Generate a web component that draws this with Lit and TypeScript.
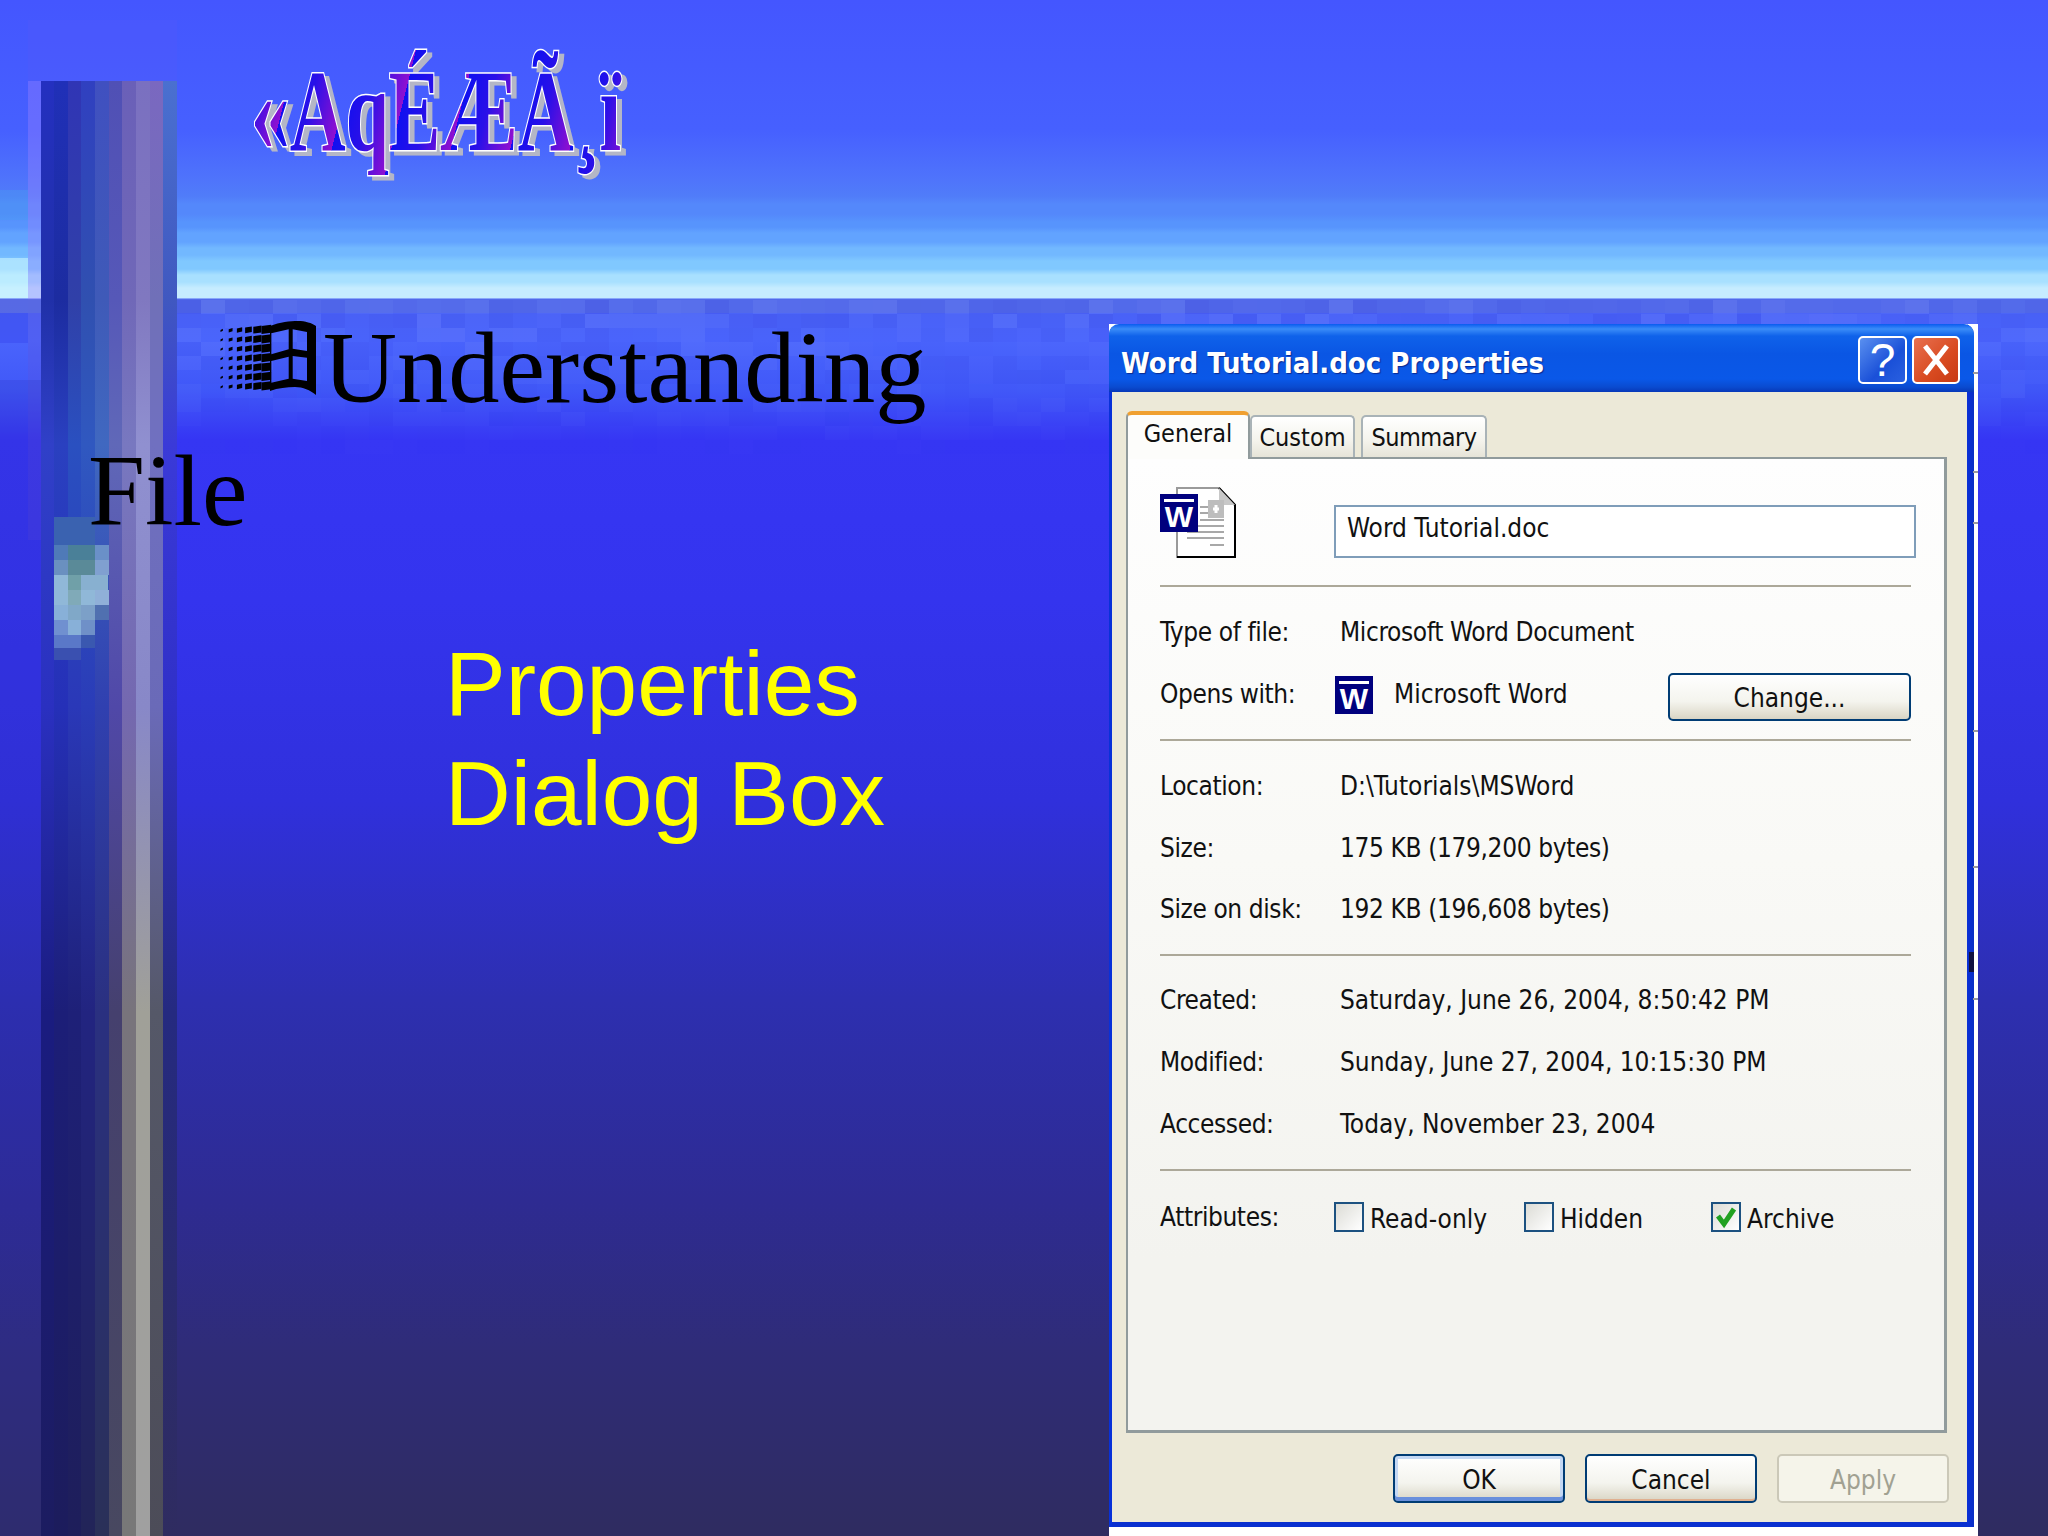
import { LitElement, html, css, svg } from "lit";
import { customElement } from "lit/decorators.js";

const COLS: [number, string[]][] = [
  [41, ["#2430c0", "#2030a8", "#3040c8", "#2a30c0", "#1a1c80", "#1c1c60"]],
  [54, ["#2030b8", "#1c2ca0", "#2a40c0", "#2530b8", "#1c1e78", "#1c1c5c"]],
  [68, ["#3035b5", "#3040a8", "#2a50c0", "#2a38b8", "#1e2078", "#1e1e5a"]],
  [81, ["#3040c0", "#3050b0", "#3058c0", "#2a3cb8", "#222480", "#222458"]],
  [95, ["#4050c0", "#3f5ab8", "#4068c0", "#3040b0", "#2a3080", "#2a3058"]],
  [109, ["#5050b5", "#5658b8", "#6068b8", "#5048a8", "#45406e", "#484860"]],
  [122, ["#6a60b8", "#7068b8", "#7878c0", "#7468b0", "#78747c", "#787878"]],
  [136, ["#7a70c0", "#8078c0", "#9090d0", "#8888c8", "#a0a098", "#a0a0a0"]],
  [150, ["#7a68c0", "#7070b8", "#7070c0", "#6a6ab8", "#555868", "#4c4c58"]],
  [163, ["#4a70d0", "#4058c0", "#3a3ad8", "#3030c8", "#252a80", "#2f2c60"]],
];
const STOPS = [0, 0.15, 0.25, 0.43, 0.64, 1];

function noise() {
  const out = [];
  let seed = 7;
  const rnd = () => {
    seed = (seed * 16807) % 2147483647;
    return seed / 2147483647;
  };
  for (let r = 0; r < 11; r++) {
    for (let c = 0; c < 78; c++) {
      const fade = 1 - r / 11;
      const v = rnd() - 0.5;
      out.push(
        svg`<rect x=${177 + c * 24} y=${300 + r * 14} width="24" height="14"
          fill=${v > 0 ? "#9ab0ff" : "#2a30d0"} fill-opacity=${(Math.abs(v) * 0.3 * fade).toFixed(3)}></rect>`
      );
    }
  }
  return out;
}

// x, y, width in columns, height, colour
const BLOTCH: [number, number, number, number, string][] = [
  [54, 517, 3, 28, "#3a62b0"],
  [54, 545, 1, 15, "#4f7ab8"], [68, 545, 2, 15, "#4a8098"], [95, 545, 1, 15, "#6a90c8"],
  [54, 560, 1, 15, "#6a90c0"], [68, 560, 2, 15, "#5a8a98"], [95, 560, 1, 15, "#80a0d0"],
  [54, 575, 1, 15, "#90b8d8"], [68, 575, 1, 15, "#70a0a8"], [81, 575, 2, 15, "#88b0d0"],
  [54, 590, 1, 15, "#90b8d8"], [68, 590, 1, 15, "#80aab8"], [81, 590, 1, 15, "#90b8d8"], [95, 590, 1, 15, "#90b0d8"],
  [54, 605, 1, 15, "#88b0d8"], [68, 605, 1, 15, "#80a8c8"], [81, 605, 1, 15, "#7ca0c8"], [95, 605, 1, 15, "#5070b0"],
  [54, 620, 1, 15, "#7090d0"], [68, 620, 1, 15, "#88b0d8"], [81, 620, 1, 15, "#6f90c8"],
  [54, 635, 2, 13, "#5a78c8"], [81, 635, 1, 13, "#3a58b0"],
  [54, 648, 2, 12, "#3a50b0"],
];

function backdrop() {
  return html`<svg class="backdrop" viewBox="0 0 2048 1536" width="2048" height="1536" aria-hidden="true">
    <defs>
      ${COLS.map(
        ([x, cs]) => svg`<linearGradient id=${"c" + x} x1="0" y1="0" x2="0" y2="1">
          ${cs.map((col, i) => svg`<stop offset=${STOPS[i]} stop-color=${col}></stop>`)}
        </linearGradient>`
      )}
    </defs>
    <rect x="177" y="299" width="1871" height="14" fill="#566ce6" fill-opacity=".7"></rect>
    ${noise()}
    <rect x="28" y="20" width="149" height="61" fill="#7a5cf0" fill-opacity=".1"></rect>
    <rect x="28" y="81" width="13" height="219" fill="#9a80ff" fill-opacity=".38"></rect>
    <rect x="28" y="300" width="13" height="240" fill="#6a50d0" fill-opacity=".2"></rect>
    <rect x="0" y="299" width="41" height="14" fill="#5a6ce0" fill-opacity=".8"></rect>
    <rect x="0" y="313" width="28" height="30" fill="#3038e8" fill-opacity=".3"></rect>
    <rect x="0" y="190" width="28" height="30" fill="#48a0f0" fill-opacity=".35"></rect>
    <rect x="0" y="258" width="28" height="40" fill="#c8f4ff" fill-opacity=".6"></rect>
    <rect x="0" y="380" width="41" height="1156" fill="#2c2cb0" fill-opacity=".18"></rect>
    ${COLS.map(
      ([x]) => svg`<rect x=${x} y="81" width="14" height="1455" fill=${"url(#c" + x + ")"}></rect>`
    )}
    ${BLOTCH.map(
      ([x, y, n, h, col]) => svg`<rect x=${x} y=${y} width=${n === 1 ? 14 : n === 2 ? 27 : 41} height=${h} fill=${col}></rect>`
    )}
  </svg>`;
}

function windowsBullet() {
  const marks = [];
  for (let c = 0; c < 6; c++) {
    for (let r = 0; r < 7; r++) {
      const s = 2 + c * 1.2;
      const x = 0.5 + c * 8.2;
      const y = 9 + r * 9.4 - c * 0.8;
      const w = s * 1.2;
      marks.push(svg`<path d="M${x} ${y + 1}l${w} -1.2v${s}l${-w} 1.2z"></path>`);
    }
  }
  return html`<svg class="bullet" viewBox="0 0 103 76" width="103" height="76" aria-hidden="true">
    <g fill="#000">${marks}</g>
    <path fill="#000" fill-rule="evenodd" d="M50 6C60 2 70 1 78 1C85 1 92 3 96 6V75C90 70 83 67 75 67C67 67 58 68 50 71ZM51.300 13.300L68.700 9.300V29.300L51.300 34.300ZM72.700 9.300L87 12V31L72.700 28.700ZM51.300 41L68.700 36.700V58.700L51.300 62.700ZM72.700 36L87 37.700V61L72.700 58.700Z"></path>
  </svg>`;
}

function wordBadge() {
  return svg`<rect x="0" y="0" width="38" height="38" fill="#00007e"></rect>
    <rect x="4" y="5" width="30" height="3" fill="#fff"></rect>
    <text x="19" y="33" text-anchor="middle" font-family="Liberation Sans" font-weight="700" font-size="30" fill="#fff">W</text>`;
}

@customElement("file-icon")
class FileIcon extends LitElement {
  static styles = css`
    :host { display: block; width: 76px; height: 71px; }
    svg { display: block; }
  `;
  render() {
    return html`<svg viewBox="0 0 76 71" width="76" height="71" aria-hidden="true">
      <path d="M17 1H59L75 18V70H17Z" fill="#fff" stroke="#9a9a9a" stroke-width="2"></path>
      <path d="M59 1L75 18V70H17" fill="none" stroke="#000" stroke-width="2"></path>
      <path d="M59 1V18H75Z" fill="#c8c8c8"></path>
      <rect x="48" y="13" width="16" height="18" fill="#bdbdbd"></rect>
      <path d="M53 22h6M56 18v8" stroke="#fff" stroke-width="3"></path>
      <path d="M40 20h8M40 26h8M40 33h24M27 39h37M27 45h37M27 51h37M50 58h14" stroke="#a8a8a8" stroke-width="2"></path>
      <g transform="translate(0 7)">${wordBadge()}</g>
    </svg>`;
  }
}

@customElement("app-root")
class AppRoot extends LitElement {
  static styles = css`
    :host {
      display: block;
      position: relative;
      width: 2048px;
      height: 1536px;
      overflow: hidden;
      background: linear-gradient(180deg,
        #4456ff 0, #4660ff 130px, #4f74fb 180px,
        #507cf9 196px, #5488fb 204px, #5488fb 214px, #5794fd 222px, #5794fd 227px,
        #62a3ff 233px, #62a3ff 242px, #72b8ff 248px, #72b8ff 255px, #80c8ff 261px, #80c8ff 269px,
        #a8e0ff 275px, #a8e0ff 282px, #c6ecff 288px, #c6ecff 298px,
        #4a62f4 299px, #4a64fc 340px, #4058f8 390px, #3636f4 440px, #3434ee 600px, #3030dc 800px,
        #2d2fb0 1000px, #2e2b92 1200px, #2f2c78 1350px, #2f2c60 1536px);
      font-family: "DejaVu Sans Condensed", "Liberation Sans", sans-serif;
    }
    .backdrop { position: absolute; left: 0; top: 0; display: block; }
    .slide { position: relative; display: grid; grid-template-columns: 1109px 869px; height: 1536px; }

    .left { padding-top: 40px; }
    .wordart { display: block; margin-left: 240px; overflow: visible; }
    .wa {
      font-family: "Liberation Serif", serif;
      font-size: 116px;
      font-weight: 700;
      stroke: #fff;
      stroke-width: 3px;
      paint-order: stroke;
      filter: drop-shadow(5px 4px 0 #b4b6c6);
    }

    h1 {
      margin: 106px 0 0;
      padding-left: 88px;
      font: 400 102.500px/123px "Liberation Serif", serif;
      color: #000;
      text-indent: 132px;
      white-space: nowrap;
    }
    .bullet { display: inline-block; vertical-align: 6px; text-indent: 0; }
    .callout {
      margin: 77px 0 0 445px;
      font: 400 91px/110px "Liberation Sans", sans-serif;
      color: #ffff00;
    }

    .right { padding-top: 324px; }
    .shot {
      position: relative;
      height: 1212px;
      background: #fff;
      padding-right: 4px;
    }
    .tick { position: absolute; right: 0; width: 5px; height: 2px; background: #9a9aa0; }
    .tick.d { width: 5px; height: 20px; background: #101040; right: 4px; }

    .dialog {
      height: 1203px;
      border-radius: 10px 10px 0 0;
      background: linear-gradient(90deg, #0831d9 0 3px, transparent 3px), linear-gradient(270deg, #0a2ec4 0, #0a30d8 7px, transparent 7px), linear-gradient(0deg, #0a30d0 0 5px, #ece9d8 5px);
      display: flex;
      flex-direction: column;
    }
    .titlebar {
      height: 68px;
      flex: none;
      border-radius: 10px 10px 0 0;
      background: linear-gradient(180deg, #0a5cf0 0, #3a8cf8 5px, #0f62ea 12px, #0a56e4 30px, #0a58e8 55px, #0a4bd0 63px, #0838b8 68px);
      display: flex;
      align-items: flex-start;
      padding: 12px 14px 0 12px;
      box-sizing: border-box;
    }
    .title {
      flex: 1;
      font-weight: 700;
      font-size: 29px;
      line-height: 37px;
      margin-top: 9px;
      color: #fff;
      text-shadow: 1px 1px 1px #0a2a90;
      white-space: nowrap;
    }
    .cap {
      width: 49px;
      height: 48px;
      box-sizing: border-box;
      border: 2px solid #fff;
      border-radius: 5px;
      color: #fff;
      display: flex;
      align-items: center;
      justify-content: center;
      font: 400 46px/44px "Liberation Sans", sans-serif;
      margin-left: 5px;
    }
    .help { background: linear-gradient(135deg, #5a90f0, #1a50d8 60%, #2a60e0); }
    .close { background: linear-gradient(135deg, #e87050, #d84a20 60%, #c83a14); width: 48px; }
    .close svg { display: block; }

    .body { flex: 1; display: flex; flex-direction: column; padding: 0 8px 5px 3px; }
    .tabs { display: flex; align-items: flex-end; height: 65px; flex: none; padding-left: 14px; }
    .tab {
      box-sizing: border-box;
      height: 42px;
      border: 2px solid #a9b3b7;
      border-bottom: none;
      border-radius: 5px 5px 0 0;
      background: linear-gradient(180deg, #fff, #f4f3ec 60%, #e6e4d8);
      font-size: 25px;
      line-height: 42px;
      color: #111;
      text-align: center;
    }
    .t-custom { width: 105px; margin-right: 6px; }
    .t-summary { width: 126px; letter-spacing: -0.5px; }
    .t-general {
      width: 124px;
      height: 48px;
      border-color: #919b9c;
      border-top: 4px solid #f0a030;
      border-radius: 6px 6px 0 0;
      background: #fdfdfb;
      line-height: 37px;
      margin-bottom: -2px;
      position: relative;
      z-index: 1;
    }
    .panel {
      box-sizing: border-box;
      margin-left: 14px;
      width: 821px;
      height: 976px;
      flex: none;
      border: 2px solid #919b9c;
      border-bottom-width: 3px;
      border-right-width: 3px;
      background: linear-gradient(180deg, #fefefe 0, #f9f9f6 400px, #f3f3ef 800px);
      padding: 28px 0 0 32px;
      font-size: 26px;
      color: #111;
    }
    .head { display: grid; grid-template-columns: 174px 582px; height: 71px; }
    .name {
      box-sizing: border-box;
      height: 53px;
      margin-top: 18px;
      border: 2px solid #7f9db9;
      background: #fff;
      padding-left: 11px;
      line-height: 43px;
      white-space: nowrap;
    }
    .sep { width: 751px; height: 2px; background: #aca899; }
    .sep.s1 { margin-top: 27px; }
    .gap { margin-top: 14px; }
    .gap-c { margin-top: 13.500px; }
    .gap-l { margin-top: 14px; }
    .gap-a { margin-top: 15px; }
    .row {
      display: grid;
      grid-template-columns: 180px 1fr;
      height: 62px;
      width: 751px;
      line-height: 62px;
      white-space: nowrap;
    }
    .row > span:first-child { letter-spacing: -0.4px; }
    .row.short { height: 61.500px; }
    .narrow { letter-spacing: -0.37px; }
    .opens { grid-template-columns: 174px 60px 1fr 243px; }
    .mini { display: block; margin-top: 13px; }
    .btn {
      box-sizing: border-box;
      border: 2px solid #003c74;
      border-radius: 5px;
      background: linear-gradient(180deg, #fff, #f4f4ee 60%, #e0ddcf 90%, #d8d4c4);
      color: #111;
      font-size: 26px;
      text-align: center;
      width: 172px;
      height: 49px;
      line-height: 48px;
    }
    .opens .btn { width: 243px; margin-top: 10px; height: 48px; line-height: 46px; }
    .attrs { grid-template-columns: 174px 190px 187px 1fr; }
    .check { display: flex; align-items: center; gap: 6px; height: 62px; }
    .check span { position: relative; top: 2px; }
    .box {
      box-sizing: border-box;
      width: 30px;
      height: 30px;
      border: 2px solid #1c5180;
      background: linear-gradient(135deg, #dcdcd6, #fff);
      flex: none;
      display: block;
    }
    .box svg { display: block; }

    .foot {
      flex: 1;
      display: flex;
      justify-content: flex-end;
      gap: 20px;
      padding: 21px 17px 0 0;
      box-sizing: border-box;
    }
    .btn.ok { border-color: #003c74; box-shadow: inset 0 3px 0 #c4d8f4, inset 0 -4px 0 #6a90dc, inset 3px 0 0 #c4d8f4, inset -3px 0 0 #c4d8f4; }
    .btn.cancel { box-shadow: inset 0 -2px 0 #e0b090; }
    .btn.apply { border-color: #cbc8b8; background: #f5f4ea; color: #a1a192; }
  `;

  render() {
    return html`${backdrop()}
      <div class="slide">
        <div class="left">
          <svg class="wordart" viewBox="0 0 420 160" width="420" height="160">
            <defs>
              <linearGradient id="wa" gradientUnits="userSpaceOnUse" x1="0" y1="0" x2="56" y2="14" spreadMethod="repeat">
                <stop offset="0" stop-color="#1010f0"></stop>
                <stop offset=".45" stop-color="#2a10e8"></stop>
                <stop offset="1" stop-color="#9010d0"></stop>
              </linearGradient>
            </defs>
            <text class="wa" x="11" y="110" textLength="370" lengthAdjust="spacingAndGlyphs" fill="url(#wa)">«AqÉÆÃ¸ï</text>
          </svg>
          <h1>${windowsBullet()}Understanding<br />File</h1>
          <div class="callout">Properties<br />Dialog Box</div>
        </div>
        <div class="right">
          <div class="shot">
            <i class="tick" style="top:48px"></i>
            <i class="tick" style="top:147px"></i>
            <i class="tick" style="top:198px"></i>
            <i class="tick" style="top:406px"></i>
            <i class="tick" style="top:542px"></i>
            <i class="tick d" style="top:628px"></i>
            <i class="tick" style="top:674px"></i>
            <div class="dialog">
              <div class="titlebar">
                <div class="title">Word Tutorial.doc Properties</div>
                <div class="cap help">?</div>
                <div class="cap close">
                  <svg viewBox="0 0 44 44" width="44" height="44"><path d="M11 8L33 36M33 8L11 36" stroke="#fff" stroke-width="5"></path></svg>
                </div>
              </div>
              <div class="body">
                <div class="tabs">
                  <div class="tab t-general">General</div>
                  <div class="tab t-custom">Custom</div>
                  <div class="tab t-summary">Summary</div>
                </div>
                <div class="panel">
                  <div class="head">
                    <file-icon></file-icon>
                    <div class="name">Word Tutorial.doc</div>
                  </div>
                  <div class="sep s1"></div>
                  <div class="row gap"><span>Type of file:</span><span class="narrow">Microsoft Word Document</span></div>
                  <div class="row opens">
                    <span>Opens with:</span>
                    <svg class="mini" viewBox="0 0 38 38" width="40" height="38">${wordBadge()}</svg>
                    <span>Microsoft Word</span>
                    <div class="btn">Change...</div>
                  </div>
                  <div class="sep gap"></div>
                  <div class="row gap short"><span>Location:</span><span>D:\\Tutorials\\MSWord</span></div>
                  <div class="row short"><span>Size:</span><span class="narrow">175 KB (179,200 bytes)</span></div>
                  <div class="row short"><span>Size on disk:</span><span class="narrow">192 KB (196,608 bytes)</span></div>
                  <div class="sep gap"></div>
                  <div class="row gap-c"><span>Created:</span><span>Saturday, June 26, 2004, 8:50:42 PM</span></div>
                  <div class="row"><span>Modified:</span><span>Sunday, June 27, 2004, 10:15:30 PM</span></div>
                  <div class="row"><span>Accessed:</span><span>Today, November 23, 2004</span></div>
                  <div class="sep gap-l"></div>
                  <div class="row attrs gap-a">
                    <span>Attributes:</span>
                    <div class="check"><i class="box"></i><span>Read-only</span></div>
                    <div class="check"><i class="box"></i><span>Hidden</span></div>
                    <div class="check">
                      <i class="box"><svg viewBox="0 0 26 26" width="26" height="26"><path d="M5 12L11 20L21 5" fill="none" stroke="#21a121" stroke-width="5"></path></svg></i>
                      <span>Archive</span>
                    </div>
                  </div>
                </div>
                <div class="foot">
                  <div class="btn ok">OK</div>
                  <div class="btn cancel">Cancel</div>
                  <div class="btn apply">Apply</div>
                </div>
              </div>
            </div>
          </div>
        </div>
      </div>`;
  }
}
